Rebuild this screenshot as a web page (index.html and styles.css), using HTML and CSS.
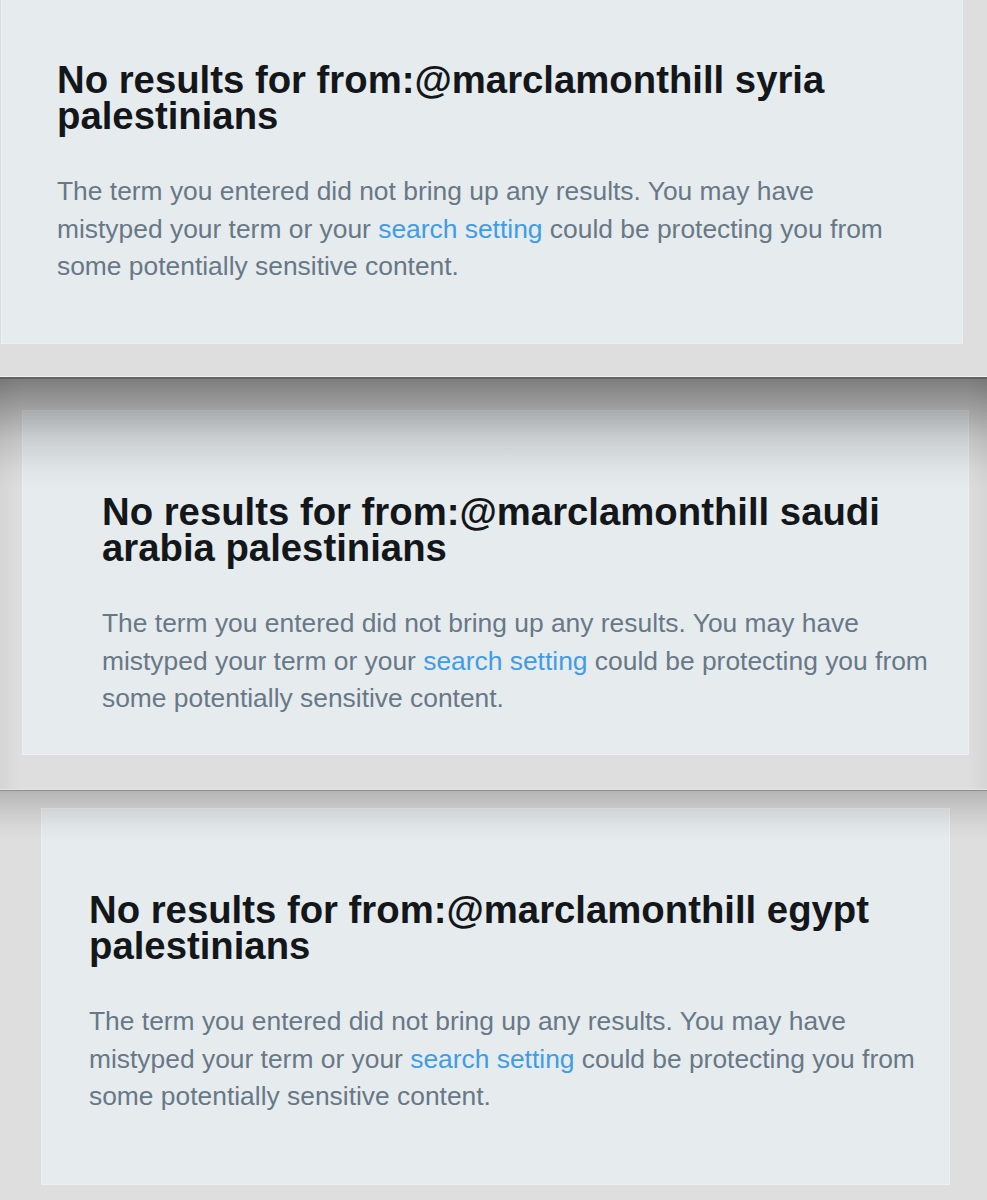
FILE: index.html
```html
<!DOCTYPE html>
<html lang="en">
<head>
<meta charset="utf-8">
<title>No results</title>
<link rel="stylesheet" href="styles.css">
</head>
<body>
<div class="page">
  <section class="shot shot1">
    <div class="card">
      <h2 class="title">No results for from:@marclamonthill syria palestinians</h2>
      <p class="msg">The term you entered did not bring up any results. You may have mistyped your term or your <a class="link" href="#">search setting</a> could be protecting you from some potentially sensitive content.</p>
    </div>
  </section>
  <section class="shot shot2">
    <div class="card">
      <h2 class="title">No results for from:@marclamonthill saudi arabia palestinians</h2>
      <p class="msg">The term you entered did not bring up any results. You may have mistyped your term or your <a class="link" href="#">search setting</a> could be protecting you from some potentially sensitive content.</p>
    </div>
  </section>
  <section class="shot shot3">
    <div class="card">
      <h2 class="title">No results for from:@marclamonthill egypt palestinians</h2>
      <p class="msg">The term you entered did not bring up any results. You may have mistyped your term or your <a class="link" href="#">search setting</a> could be protecting you from some potentially sensitive content.</p>
    </div>
  </section>
</div>
</body>
</html>
```

FILE: styles.css
```css
* { box-sizing: border-box; }

html, body {
  margin: 0;
  padding: 0;
  background: #dedede;
}

body {
  font-family: "Liberation Sans", Arial, Helvetica, sans-serif;
  width: 987px;
  height: 1200px;
  overflow: hidden;
}

.page {
  display: flex;
  flex-direction: column;
}

.shot {
  position: relative;
  overflow: hidden;
  background: #dedede;
}

.card {
  background: #e6ebee;
  border: 1px solid #edf0f2;
}

.title {
  margin: 0;
  max-width: 850px;
  font-size: 38.3px;
  line-height: 36px;
  font-weight: 700;
  color: #14171a;
}

.msg {
  margin: 39px 0 0;
  max-width: 852px;
  font-size: 26.4px;
  line-height: 37.5px;
  color: #687887;
}

.link {
  color: #3f9ce6;
  text-decoration: none;
}

/* first screenshot */
.shot1 {
  height: 377px;
  padding-left: 1px;
  border-bottom: 1px solid #f1f1f1;
}

.shot1 .card {
  width: 962px;
  height: 344px;
  border-top: none;
  padding: 62px 40px 0 55px;
}

/* second screenshot */
.shot2 {
  height: 413px;
  border-top: 2px solid #626262;
  border-bottom: 1px solid #e6e6e6;
  padding: 31px 0 0 22px;
}

.shot2 .card {
  width: 947px;
  height: 345px;
  padding: 83px 10px 0 79px;
}

.shot2::after {
  content: "";
  position: absolute;
  inset: 0;
  pointer-events: none;
  background:
    linear-gradient(to bottom, rgba(0,0,0,0.44) 0, rgba(0,0,0,0.28) 30px, rgba(0,0,0,0.12) 60px, rgba(0,0,0,0.03) 90px, rgba(0,0,0,0) 110px),
    linear-gradient(to right, rgba(0,0,0,0.04) 0, rgba(0,0,0,0) 20px, rgba(0,0,0,0) calc(100% - 20px), rgba(0,0,0,0.04) 100%);
}

/* third screenshot */
.shot3 {
  flex: 1;
  height: 410px;
  border-top: 1px solid #8c8c8c;
  padding: 17px 0 0 41px;
}

.shot3 .card {
  width: 909px;
  height: 377px;
  padding: 83px 5px 0 47px;
}

.shot3::after {
  content: "";
  position: absolute;
  inset: 0;
  pointer-events: none;
  background: linear-gradient(to bottom, rgba(0,0,0,0.18) 0, rgba(0,0,0,0.1) 17px, rgba(0,0,0,0.03) 35px, rgba(0,0,0,0) 50px);
}
```
